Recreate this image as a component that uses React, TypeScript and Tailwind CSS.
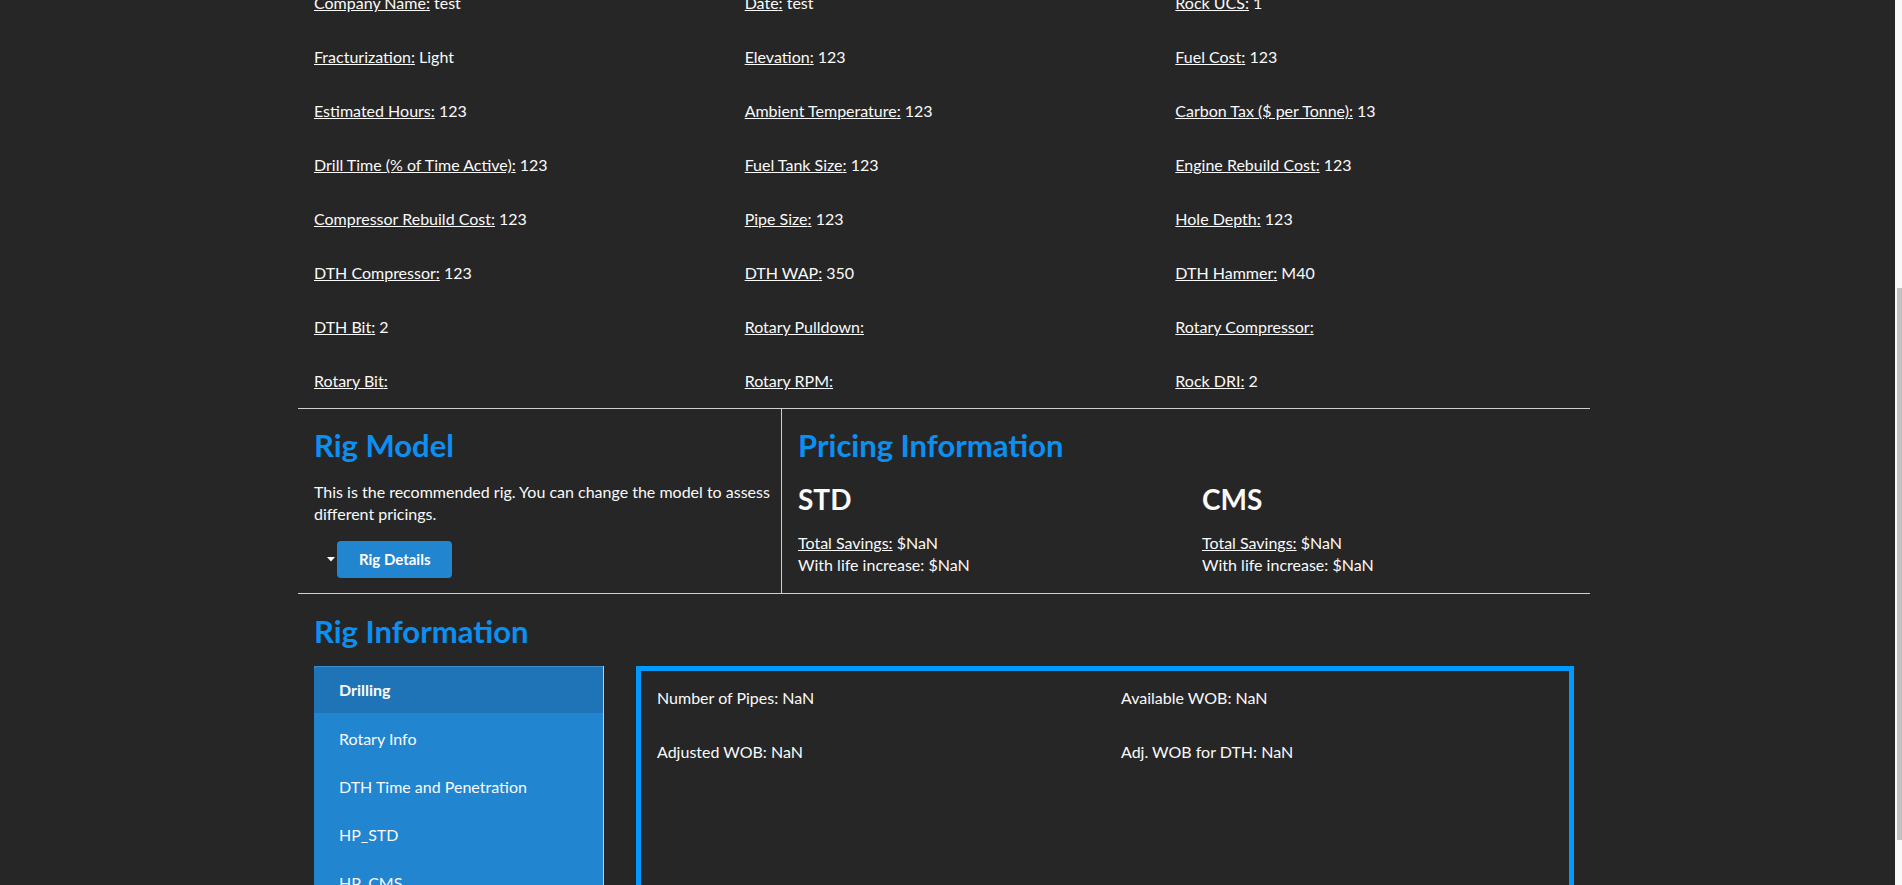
import React from "react";

const siteFields = [
  ["Company Name", "test"],
  ["Date", "test"],
  ["Rock UCS", "1"],
  ["Fracturization", "Light"],
  ["Elevation", "123"],
  ["Fuel Cost", "123"],
  ["Estimated Hours", "123"],
  ["Ambient Temperature", "123"],
  ["Carbon Tax ($ per Tonne)", "13"],
  ["Drill Time (% of Time Active)", "123"],
  ["Fuel Tank Size", "123"],
  ["Engine Rebuild Cost", "123"],
  ["Compressor Rebuild Cost", "123"],
  ["Pipe Size", "123"],
  ["Hole Depth", "123"],
  ["DTH Compressor", "123"],
  ["DTH WAP", "350"],
  ["DTH Hammer", "M40"],
  ["DTH Bit", "2"],
  ["Rotary Pulldown", ""],
  ["Rotary Compressor", ""],
  ["Rotary Bit", ""],
  ["Rotary RPM", ""],
  ["Rock DRI", "2"],
];

const tabs = ["Drilling", "Rotary Info", "DTH Time and Penetration", "HP_STD", "HP_CMS"];

const drillingStats = [
  "Number of Pipes: NaN",
  "Available WOB: NaN",
  "Adjusted WOB: NaN",
  "Adj. WOB for DTH: NaN",
];

function PriceColumn({ title }: { title: string }) {
  return (
    <div className="px-4">
      <h3 className="mt-[18px] text-[28px] leading-[34px] font-bold">{title}</h3>
      <p className="mt-4 text-base leading-[22px]">
        <u>Total Savings:</u> $NaN
        <br />
        With life increase: $NaN
      </p>
    </div>
  );
}

export default function App() {
  return (
    <div className="flex h-[885px] overflow-hidden bg-[#262626] font-['Lato',sans-serif] text-[#fafafa]">
      <main className="flex-1 overflow-hidden">
        <div className="ml-[298px] w-[1292px] -mt-[24px]">
          {/* Site details */}
          <div className="grid grid-cols-3">
            {siteFields.map(([label, value]) => (
              <div key={label} className="px-4 py-[15px] text-base leading-6">
                <u>{label}:</u> {value}
              </div>
            ))}
          </div>

          {/* Rig model + pricing */}
          <div className="flex border-y border-[#cfcfcf]">
            <div className="w-[484px] border-r border-[#cfcfcf] pl-4 pr-2 pt-[17px] pb-[15px]">
              <h2 className="text-[31px] leading-[38px] font-bold text-[#0b90f2]">Rig Model</h2>
              <p className="mt-[17px] text-base leading-[22px]">
                This is the recommended rig. You can change the model to assess different pricings.
              </p>
              <div className="mt-4 flex items-center pl-[13px]">
                <svg width="8" height="5" viewBox="0 0 8 5" className="mr-[2px]">
                  <path d="M0 0h8L4 4.5z" fill="#ffffff" />
                </svg>
                <button className="h-[37px] rounded-[4px] bg-[#2185d0] px-[22px] text-[15px] font-bold text-white">
                  Rig Details
                </button>
              </div>
            </div>
            <div className="flex-1 pt-[17px]">
              <h2 className="px-4 text-[31px] leading-[38px] font-bold text-[#0b90f2]">
                Pricing Information
              </h2>
              <div className="grid grid-cols-2">
                <PriceColumn title="STD" />
                <PriceColumn title="CMS" />
              </div>
            </div>
          </div>

          {/* Rig information */}
          <div className="px-4">
            <h2 className="mt-[18px] text-[31px] leading-[38px] font-bold text-[#0b90f2]">Rig Information</h2>
            <div className="mt-4 flex gap-8">
              <div className="w-[290px] border-r border-[#c9ced3] bg-[#2185d0]">
                {tabs.map((tab, i) => (
                  <div
                    key={tab}
                    className={
                      i === 0
                        ? "flex h-[47px] items-center rounded-tl-[4px] border-t border-[#3d8fcc] bg-[#1f74b8] pl-[25px] text-base font-bold"
                        : "flex h-[48px] items-center pl-[25px] pt-[3px] text-base"
                    }
                  >
                    {tab}
                  </div>
                ))}
              </div>
              <div className="min-h-[320px] flex-1 border-[5px] border-[#0099ff]">
                <div className="grid grid-cols-2">
                  {drillingStats.map((s) => (
                    <div key={s} className="px-4 py-[15px] text-base leading-6">
                      {s}
                    </div>
                  ))}
                </div>
              </div>
            </div>
          </div>
        </div>
      </main>

      {/* page scrollbar */}
      <aside className="w-[7px] bg-[#f8f8f8] pl-[2px]">
        <div className="mt-[288px] h-[552px] bg-[#c1c1c1]" />
      </aside>
    </div>
  );
}
